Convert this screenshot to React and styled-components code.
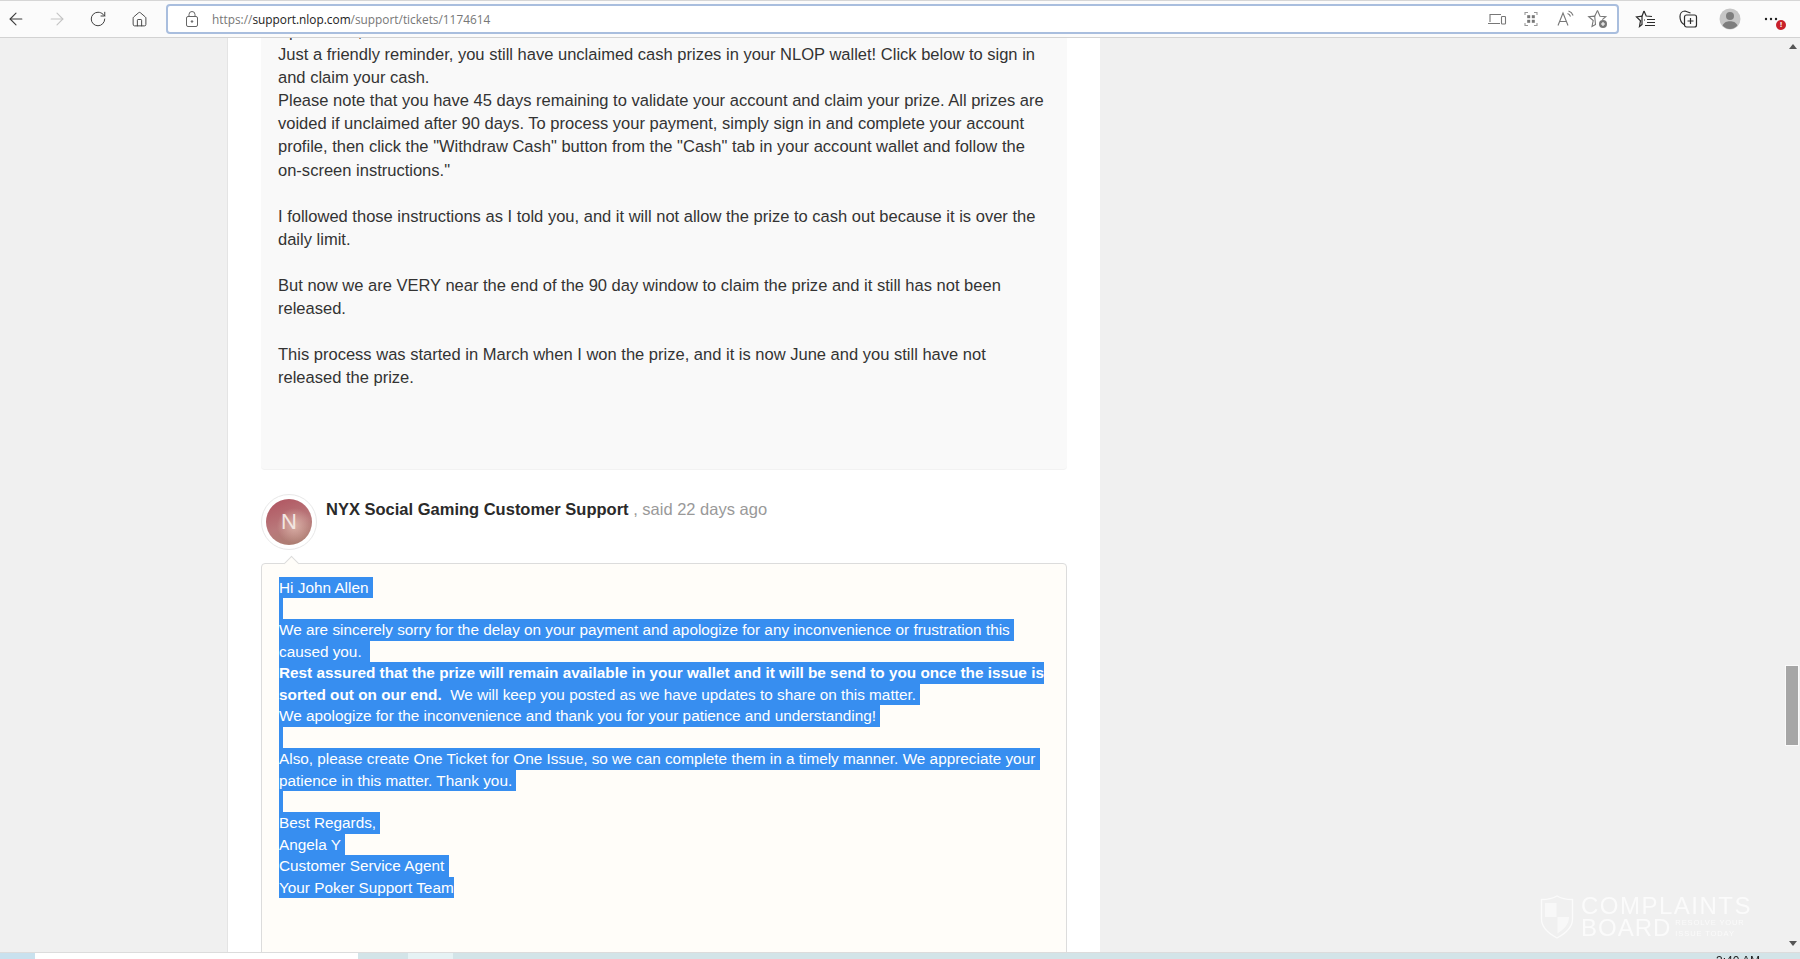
import React from 'react';
import styled, { createGlobalStyle } from 'styled-components';
import { ArrowLeft, ArrowRight, RotateCw, House } from 'lucide-react';

const GlobalStyle = createGlobalStyle`
  html, body { margin: 0; padding: 0; height: 100%; overflow: hidden; }
  body { font-family: "Liberation Sans", Arial, sans-serif; background: #f0f0f0; }
  #root { height: 100%; }
`;

const Screen = styled.div`
  height: 959px;
  display: flex;
  flex-direction: column;
  overflow: hidden;
  filter: blur(0.3px);
`;

const Toolbar = styled.header`
  flex: 0 0 38px;
  box-sizing: border-box;
  display: flex;
  align-items: center;
  background: #fbfbfb;
  border-top: 1px solid #d6d6d6;
  border-bottom: 1px solid #d2d2d2;
`;

const NavGroup = styled.div`
  display: flex;
  align-items: center;
  gap: 17px;
  padding-left: 4px;
  width: 162px;
  box-sizing: content-box;
  flex: none;
`;

const ToolButton = styled.span`
  width: 24px;
  height: 24px;
  display: flex;
  align-items: center;
  justify-content: center;
  flex: none;
  color: ${({ $muted }) => ($muted ? '#c4c4c4' : '#3c3c3c')};
  position: relative;
`;

const AddressBar = styled.div`
  width: 1453px;
  height: 30px;
  box-sizing: border-box;
  flex: none;
  display: flex;
  align-items: center;
  background: #fff;
  border: 2px solid #a9bede;
  border-radius: 4px;
  padding: 0 6px 0 16px;
`;

const UrlText = styled.span`
  margin-left: 12px;
  font-family: "Open Sans", "Liberation Sans", sans-serif;
  font-size: 11.85px;
  color: #777;
  flex: 1;
  white-space: nowrap;
  b { font-weight: 400; color: #222; }
`;

const BarIcons = styled.div`
  display: flex;
  align-items: center;
  gap: 10px;
  color: #777;
`;

const EndIcons = styled.div`
  display: flex;
  align-items: center;
  gap: 18px;
  padding-left: 15px;
`;

const Badge = styled.span`
  position: absolute;
  right: -2px;
  bottom: 1px;
  width: 10px;
  height: 10px;
  border-radius: 50%;
  background: #c8202a;
  color: #fff;
  font-size: 8px;
  font-weight: 700;
  line-height: 10px;
  text-align: center;
`;

const Viewport = styled.div`
  flex: 1;
  min-height: 0;
  display: flex;
  position: relative;
  overflow: hidden;
  background: #f0f0f0;
`;

const Gutter = styled.div`
  flex: 1;
  min-width: 0;
  padding-left: 227px;
`;

const Column = styled.main`
  width: 873px;
  box-sizing: border-box;
  min-height: 100%;
  background: #fff;
  border-left: 1px solid #e4e4e4;
  padding: 0 33px;
`;

const QuoteCard = styled.section`
  margin-top: -18px;
  padding: 0 17px 79px;
  background: #f9f9f9;
  border-radius: 0 0 4px 4px;
  border-bottom: 1px solid #f2f2f2;
  font-size: 16.53px;
  line-height: 23.1px;
  color: #333;
`;

const QuoteLine = styled.div`
  white-space: pre;
  min-height: 23.1px;
`;

const Author = styled.div`
  display: flex;
  gap: 9px;
  margin-top: 24px;
  height: 69px;
`;

const AvatarRing = styled.div`
  width: 56px;
  height: 56px;
  box-sizing: border-box;
  border-radius: 50%;
  border: 1px solid #e8e8e8;
  padding: 4px;
  flex: none;
`;

const Avatar = styled.div`
  width: 100%;
  height: 100%;
  border-radius: 50%;
  background:
    radial-gradient(circle at 62% 58%, #d9b0a6 0%, rgba(217, 176, 166, 0) 45%),
    linear-gradient(160deg, #b0525f 0%, #b9797b 55%, #a8806f 100%);
  color: #f2e6e2;
  font-size: 22px;
  display: flex;
  align-items: center;
  justify-content: center;
`;

const AuthorLine = styled.div`
  padding-top: 4px;
  font-size: 16.5px;
  line-height: 22px;
  color: #999;
  b { color: #2a2a2a; font-weight: 700; }
`;

const ReplyCard = styled.section`
  position: relative;
  box-sizing: border-box;
  height: 500px;
  padding: 13px 17px;
  background: #fffdf9;
  border: 1px solid #dcdcdc;
  border-radius: 4px;
  font-size: 15.33px;
  line-height: 21.45px;
  color: #fff;

  &::before {
    content: '';
    position: absolute;
    top: -6px;
    left: 24px;
    width: 10px;
    height: 10px;
    background: #fffdf9;
    border-top: 1px solid #dcdcdc;
    border-left: 1px solid #dcdcdc;
    transform: rotate(45deg);
  }
`;

const Selected = styled.div`
  width: fit-content;
  min-width: 4px;
  min-height: 21.45px;
  white-space: pre;
  background: #378ef0;
`;

const Scrollbar = styled.aside`
  flex: 0 0 15px;
  margin-left: auto;
  position: relative;
  display: flex;
  flex-direction: column;
  justify-content: space-between;
  align-items: center;
  padding: 6px 0;
  box-sizing: border-box;
`;

const ScrollArrow = styled.span`
  width: 0;
  height: 0;
  border-left: 4px solid transparent;
  border-right: 4px solid transparent;
  ${({ $down }) => ($down ? 'border-top: 5px solid #555;' : 'border-bottom: 5px solid #555;')}
`;

const ScrollThumb = styled.span`
  position: absolute;
  top: 628px;
  left: 1px;
  right: 2px;
  height: 79px;
  background: #a6a6a6;
  outline: 1px solid #fafafa;
`;

const Watermark = styled.div`
  position: absolute;
  left: 1540px;
  top: 857px;
  display: flex;
  gap: 7px;
  color: rgba(255, 255, 255, 0.7);
  filter: blur(0.5px);
`;

const MarkText = styled.div`
  display: flex;
  flex-direction: column;
`;

const MarkTitle = styled.span`
  font-size: 24px;
  line-height: 22px;
  letter-spacing: ${({ $wide }) => ($wide ? 1 : 1.5)}px;
  white-space: nowrap;
`;

const MarkRow = styled.div`
  display: flex;
  gap: 4px;
  align-items: center;
`;

const MarkTag = styled.span`
  font-size: 7.5px;
  line-height: 11px;
  letter-spacing: 0.9px;
  white-space: nowrap;
`;

const Taskbar = styled.footer`
  flex: 0 0 7px;
  overflow: hidden;
  display: flex;
  background: #d3e4e8;
  border-top: 1px solid #dcdcdc;
  box-sizing: border-box;
`;

const TaskSlot = styled.div`
  flex: none;
  width: ${({ $w }) => $w}px;
  background: ${({ $bg }) => $bg};
`;

const Clock = styled.span`
  margin-left: auto;
  margin-right: 40px;
  font-size: 12px;
  line-height: 12px;
  color: #222;
  margin-top: 2px;
`;

const LockIcon = () => (
  <svg width="16" height="18" viewBox="0 0 16 18" fill="none" stroke="#666" strokeWidth="1">
    <rect x="2.5" y="6.5" width="11" height="10" rx="1.5" />
    <path d="M5 6.5V4.500a3 3 0 0 1 6 0v2" />
    <circle cx="8" cy="11.5" r="0.8" fill="#666" />
  </svg>
);

const DeviceIcon = () => (
  <svg width="24" height="20" viewBox="0 0 24 20" fill="none" stroke="currentColor" strokeWidth="1.1">
    <path d="M5 13V5.500h11M3 14.500h12" />
    <rect x="16.5" y="7.5" width="4" height="7.5" rx="0.8" />
  </svg>
);

const ScanIcon = () => (
  <svg width="24" height="20" viewBox="0 0 24 20" fill="none" stroke="#999" strokeWidth="1.1">
    <path d="M6 6V3.500h3M15 3.500h3V6M18 14v2.500h-3M9 16.500H6V14" />
    <rect x="8.200" y="6.200" width="3" height="3" fill="#777" stroke="none" />
    <rect x="12.800" y="6.200" width="3" height="3" fill="#777" stroke="none" />
    <rect x="8.200" y="10.800" width="3" height="3" fill="#777" stroke="none" />
    <rect x="12.800" y="10.800" width="3" height="3" fill="#777" stroke="none" />
  </svg>
);

const ReadAloudIcon = () => (
  <svg width="24" height="20" viewBox="0 0 24 20" fill="none" stroke="currentColor" strokeWidth="1.1">
    <path d="M5 16.500 10 4l5 12.500M6.800 12.500h6.400" />
    <path d="M14.500 4.500c1.500.5 2.500 1.500 3 3M15.500 2c2.300.8 3.800 2.300 4.600 4.500" />
  </svg>
);

const StarPlusIcon = () => (
  <svg width="24" height="22" viewBox="0 0 24 22" fill="none" stroke="currentColor" strokeWidth="1.1">
    <path d="M10.500 2.500 13 8.200l5.800.5-3.500 3M8.500 16.500 5 18.500l1.200-6-4.500-3.800 6-.5z" />
    <path d="M10.500 2.500 7.700 8.200" />
    <circle cx="16" cy="16" r="4" fill="currentColor" stroke="none" />
    <path d="M16 14v4M14 16h4" stroke="#fff" />
  </svg>
);

const FavoritesIcon = () => (
  <svg width="24" height="22" viewBox="0 0 24 22" fill="none" stroke="#2c2c2c" strokeWidth="1.2">
    <path d="M10 3 12.200 8 18 8.500M11 12l-1 0M8 16.500 5.500 18.500l1-5.800-4-3.700 5.500-.8z" />
    <path d="M10 3 8 8.200" />
    <path d="M13 11.500h8M13 14.500h8M11 17.500h10" />
  </svg>
);

const CollectionsIcon = () => (
  <svg width="24" height="22" viewBox="0 0 24 22" fill="none" stroke="#2c2c2c" strokeWidth="1.2">
    <path d="M8 16.500C5.500 15 4 12 4 8.500 4 5.500 6 3 9 3l5.500 2" />
    <rect x="8.500" y="7" width="12" height="12" rx="2" />
    <path d="M14.500 10v6M11.500 13h6" />
  </svg>
);

const ProfileIcon = () => (
  <svg width="22" height="22" viewBox="0 0 22 22">
    <circle cx="11" cy="11" r="10.500" fill="#c6c6c6" />
    <circle cx="11" cy="8" r="4" fill="#7d7d7d" />
    <path d="M3.600 17.500C5 14 8 13.200 11 13.200s6 .8 7.400 4.300A10 10 0 0 1 11 21a10 10 0 0 1-7.400-3.500z" fill="#7d7d7d" />
  </svg>
);

const DotsIcon = () => (
  <svg width="24" height="24" viewBox="0 0 24 24" fill="#222">
    <circle cx="6" cy="12" r="1.2" />
    <circle cx="11" cy="12" r="1.2" />
    <circle cx="16" cy="12" r="1.2" />
  </svg>
);

const ShieldIcon = () => (
  <svg width="34" height="44" viewBox="0 0 34 44" fill="none" stroke="currentColor" strokeWidth="1.4">
    <path d="M17 1C12 4 6 4.500 1.500 4.500V24c0 9 8 15 15.500 19 7.500-4 15.500-10 15.500-19V4.500C28 4.500 22 4 17 1z" />
    <path d="M5 8h11.500v14H5zM17.500 22H29c0 8-6 13-11.500 16.500z" fill="currentColor" stroke="none" opacity="0.8" />
  </svg>
);

const quoteLines = [
  'Sportsman,',
  'Just a friendly reminder, you still have unclaimed cash prizes in your NLOP wallet! Click below to sign in',
  'and claim your cash.',
  'Please note that you have 45 days remaining to validate your account and claim your prize. All prizes are',
  'voided if unclaimed after 90 days. To process your payment, simply sign in and complete your account',
  'profile, then click the "Withdraw Cash" button from the "Cash" tab in your account wallet and follow the',
  'on-screen instructions."',
  '',
  'I followed those instructions as I told you, and it will not allow the prize to cash out because it is over the',
  'daily limit.',
  '',
  'But now we are VERY near the end of the 90 day window to claim the prize and it still has not been',
  'released.',
  '',
  'This process was started in March when I won the prize, and it is now June and you still have not',
  'released the prize.',
];

const App = () => (
  <Screen>
    <GlobalStyle />
    <Toolbar>
      <NavGroup>
        <ToolButton><ArrowLeft size={20} strokeWidth={1.3} /></ToolButton>
        <ToolButton $muted><ArrowRight size={20} strokeWidth={1.3} /></ToolButton>
        <ToolButton><RotateCw size={18} strokeWidth={1.3} /></ToolButton>
        <ToolButton><House size={17} strokeWidth={1.3} /></ToolButton>
      </NavGroup>
      <AddressBar>
        <LockIcon />
        <UrlText>https://<b>support.nlop.com</b>/support/tickets/1174614</UrlText>
        <BarIcons>
          <DeviceIcon />
          <ScanIcon />
          <ReadAloudIcon />
          <StarPlusIcon />
        </BarIcons>
      </AddressBar>
      <EndIcons>
        <ToolButton><FavoritesIcon /></ToolButton>
        <ToolButton><CollectionsIcon /></ToolButton>
        <ToolButton><ProfileIcon /></ToolButton>
        <ToolButton><DotsIcon /><Badge>!</Badge></ToolButton>
      </EndIcons>
    </Toolbar>

    <Viewport>
      <Gutter>
        <Column>
          <QuoteCard>
            {quoteLines.map((line, i) => (
              <QuoteLine key={i}>{line}</QuoteLine>
            ))}
          </QuoteCard>
          <Author>
            <AvatarRing><Avatar>N</Avatar></AvatarRing>
            <AuthorLine><b>NYX Social Gaming Customer Support</b> , said 22 days ago</AuthorLine>
          </Author>
          <ReplyCard>
            <Selected>Hi John Allen </Selected>
            <Selected />
            <Selected>We are sincerely sorry for the delay on your payment and apologize for any inconvenience or frustration this </Selected>
            <Selected>caused you.  </Selected>
            <Selected><b>Rest assured that the prize will remain available in your wallet and it will be send to you once the issue is</b></Selected>
            <Selected><b>sorted out on our end.</b>  We will keep you posted as we have updates to share on this matter. </Selected>
            <Selected>We apologize for the inconvenience and thank you for your patience and understanding! </Selected>
            <Selected />
            <Selected>Also, please create One Ticket for One Issue, so we can complete them in a timely manner. We appreciate your </Selected>
            <Selected>patience in this matter. Thank you. </Selected>
            <Selected />
            <Selected>Best Regards, </Selected>
            <Selected>Angela Y </Selected>
            <Selected>Customer Service Agent </Selected>
            <Selected>Your Poker Support Team</Selected>
          </ReplyCard>
        </Column>
      </Gutter>
      <Scrollbar>
        <ScrollArrow />
        <ScrollThumb />
        <ScrollArrow $down />
      </Scrollbar>
      <Watermark>
        <ShieldIcon />
        <MarkText>
          <MarkTitle>COMPLAINTS</MarkTitle>
          <MarkRow>
            <MarkTitle $wide>BOARD</MarkTitle>
            <MarkTag>RESOLVE YOUR<br />ISSUE TODAY</MarkTag>
          </MarkRow>
        </MarkText>
      </Watermark>
    </Viewport>

    <Taskbar>
      <TaskSlot $w={35} $bg="#c9e1ee" />
      <TaskSlot $w={323} $bg="#ffffff" />
      <TaskSlot $w={50} $bg="#d3e4e8" />
      <TaskSlot $w={45} $bg="#e6f2f4" />
      <Clock>3:40 AM</Clock>
    </Taskbar>
  </Screen>
);

export default App;
